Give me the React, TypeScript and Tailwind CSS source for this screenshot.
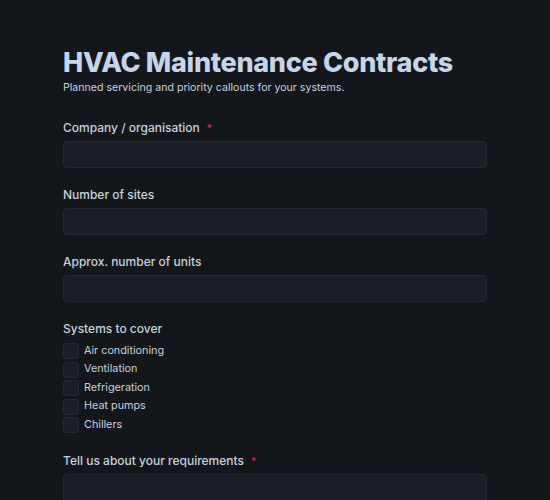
import { useState } from "react";

const SYSTEMS = ["Air conditioning", "Ventilation", "Refrigeration", "Heat pumps", "Chillers"];

function Label({ text, required }: { text: string; required?: boolean }) {
  return (
    <label className="flex items-center gap-[7px] text-[12px] leading-[16px] font-medium text-[#c7d2df] mb-[5px]">
      {text}
      {required && <span className="text-[#e0245e] text-[10px] leading-none">*</span>}
    </label>
  );
}

export default function App() {
  const [checked, setChecked] = useState<string[]>([]);

  const toggle = (s: string) =>
    setChecked((prev) => (prev.includes(s) ? prev.filter((x) => x !== s) : [...prev, s]));

  const inputCls =
    "block w-full h-[27px] rounded-[4px] bg-[#1b2028] border border-[#242a33] px-3 text-[12px] text-[#c7d2df] outline-none";

  return (
    <div
      className="min-h-screen bg-[#13171c] text-[#c7d2df]"
      style={{ fontFamily: "Inter, 'Noto Sans', sans-serif" }}
    >
      <main className="mx-auto w-[424px] pt-[46px] pb-10">
        <h1 className="text-[27px] font-extrabold leading-[34px] text-[#c5d5ea] tracking-[-0.3px] whitespace-nowrap">
          HVAC Maintenance Contracts
        </h1>
        <p className="text-[10.6px] leading-[15px] text-[#c7d2df]">
          Planned servicing and priority callouts for your systems.
        </p>

        <div className="mt-[25px] flex flex-col gap-[19px]">
          <div>
            <Label text="Company / organisation" required />
            <input type="text" className={inputCls} />
          </div>
          <div>
            <Label text="Number of sites" />
            <input type="text" className={inputCls} />
          </div>
          <div>
            <Label text="Approx. number of units" />
            <input type="text" className={inputCls} />
          </div>

          {/* Systems */}
          <div>
            <Label text="Systems to cover" />
            <div className="flex flex-col gap-[2.5px] pt-[1px]">
              {SYSTEMS.map((s) => (
                <label key={s} className="flex items-center gap-[5px] h-4 text-[10.8px] text-[#c7d2df]">
                  <button
                    type="button"
                    onClick={() => toggle(s)}
                    className={`w-4 h-4 rounded-[3px] border border-[#252b34] ${
                      checked.includes(s) ? "bg-[#3b82f6]" : "bg-[#1b2028]"
                    }`}
                  />
                  {s}
                </label>
              ))}
            </div>
          </div>

          <div className="pt-[1px]">
            <Label text="Tell us about your requirements" required />
            <textarea rows={4} className="block w-full rounded-[4px] bg-[#1b2028] border border-[#242a33] px-3 py-2 text-[12px] outline-none resize-none" />
          </div>
        </div>
      </main>
    </div>
  );
}
